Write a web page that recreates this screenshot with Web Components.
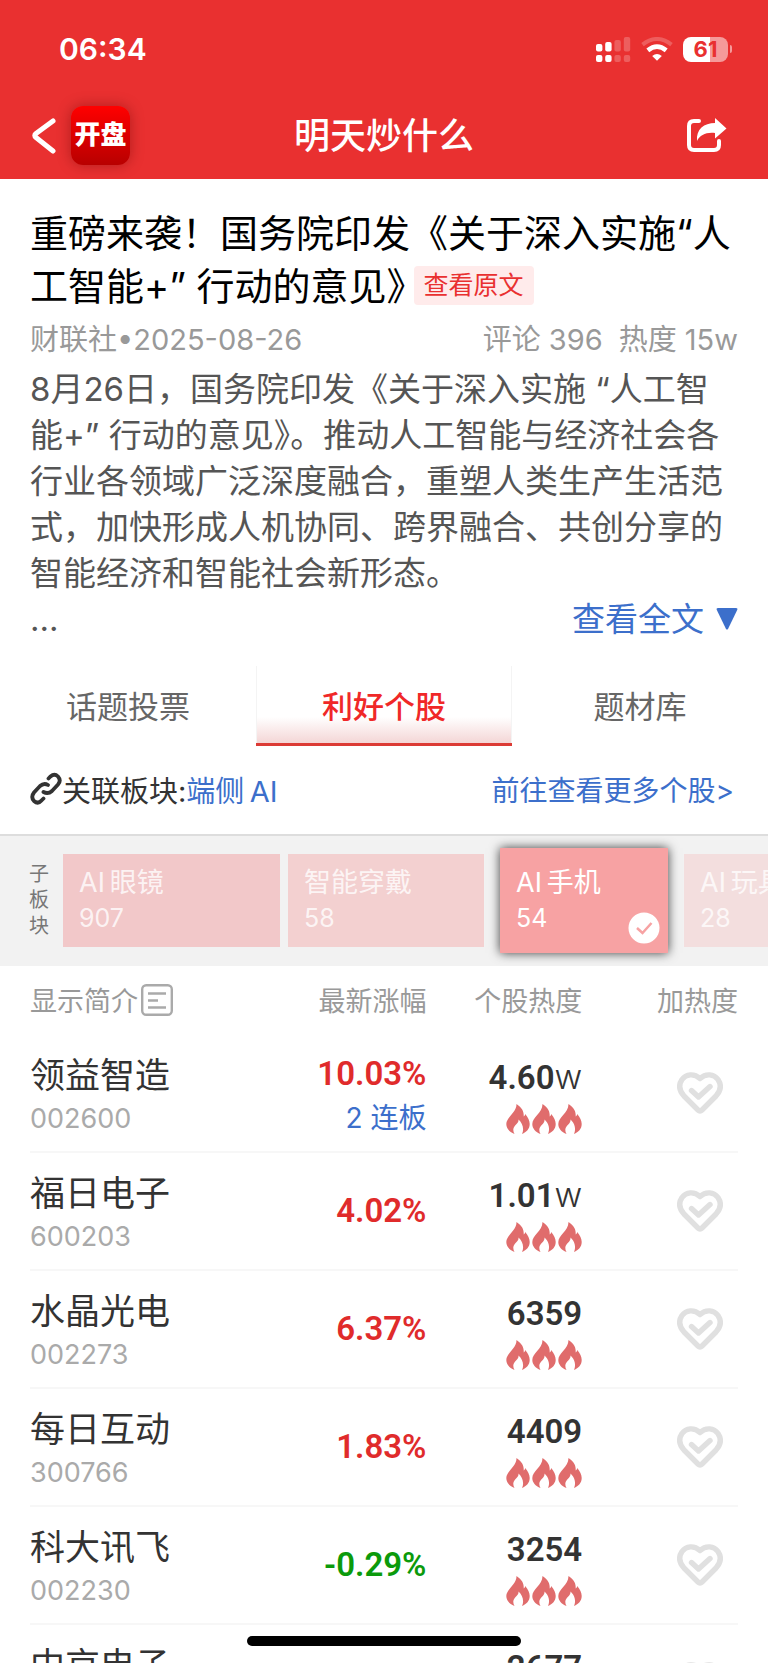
<!DOCTYPE html>
<html lang="zh-CN">
<head>
<meta charset="UTF-8">
<meta name="viewport" content="width=device-width, initial-scale=1.0">
<title>明天炒什么</title>
<style>
    body {
        margin: 0;
        height: 100vh;
        overflow: hidden;
        background: #fff;
        color: #333;
        font-family: Inter, "Noto Sans CJK SC", sans-serif;
        --red: #e93030;
        --blue: #3c6fcb;
        --grey: #999;
        --gutter: 30px;
    }
</style>
</head>
<body>
    <topic-page></topic-page>

<script>
class StatusBar extends HTMLElement {
    constructor() {
        super();
        const shadow = this.attachShadow({ mode: 'open' });
        shadow.innerHTML = `
            <style>
                :host {
                    display: flex;
                    justify-content: space-between;
                    align-items: center;
                    height: 98px;
                    padding: 0 36px 0 59px;
                }
                .time { font-size: 30px; font-weight: 600; line-height: 32px; }
                .icons { display: flex; align-items: center; gap: 10px; }
                svg { display: block; }
                .battery { display: flex; align-items: center; gap: 2px; }
                .level {
                    width: 45px;
                    height: 25px;
                    border-radius: 8px;
                    background: linear-gradient(90deg, #fff 61%, #f59a9a 61%);
                    color: var(--red);
                    font-size: 22px;
                    font-weight: 700;
                    line-height: 25px;
                    text-align: center;
                }
                .cap { width: 2px; height: 8px; border-radius: 0 4px 4px 0; background: #f59a9a; }
            </style>
            <span class="time">06:34</span>
            <div class="icons">
                <svg width="35" height="25" viewBox="0 0 35 25" fill="#fff" aria-hidden="true">
                    <rect x="0" y="7" width="6.4" height="7.5" rx="2"/>
                    <rect x="9.2" y="5" width="6.4" height="9.5" rx="2"/>
                    <rect x="0" y="18" width="6.4" height="7" rx="2"/>
                    <rect x="9.2" y="18" width="6.4" height="7" rx="2"/>
                    <g opacity=".22">
                        <rect x="18.4" y="3" width="6.4" height="11.5" rx="2"/>
                        <rect x="27.8" y="0" width="6.4" height="14.5" rx="2"/>
                        <rect x="18.4" y="18" width="6.4" height="7" rx="2"/>
                        <rect x="27.8" y="18" width="6.4" height="7" rx="2"/>
                    </g>
                </svg>
                <svg width="32" height="24" viewBox="0 0 32 24" fill="none" stroke="#fff" aria-hidden="true">
                    <path d="M1.5 7.6Q16-3.6 30.5 7.6" stroke-width="4" opacity=".22"/>
                    <path d="M6.8 13.4Q16 6 25.2 13.4" stroke-width="4.6"/>
                    <path d="M11.2 19Q16 15 20.8 19L16 23.8z" fill="#fff" stroke="none"/>
                </svg>
                <div class="battery"><span class="level">61</span><span class="cap"></span></div>
            </div>
        `;
    }
}

class NavBar extends HTMLElement {
    constructor() {
        super();
        const shadow = this.attachShadow({ mode: 'open' });
        shadow.innerHTML = `
            <style>
                :host {
                    box-sizing: border-box;
                    display: grid;
                    grid-template-columns: 1fr auto 1fr;
                    align-items: center;
                    height: 81px;
                    padding: 0 31px 6px;
                }
                .left { display: flex; align-items: center; gap: 15px; }
                button { padding: 0; border: 0; background: none; color: inherit; }
                svg { display: block; }
                .logo {
                    width: 59px;
                    height: 59px;
                    border-radius: 12px;
                    background: linear-gradient(#f00, #b80000);
                    box-shadow: 0 0 14px rgba(90, 0, 0, .4);
                    color: #fff;
                    font-size: 26px;
                    font-weight: 900;
                    line-height: 58px;
                    text-align: center;
                    text-decoration: none;
                }
                h1 { margin: 0; font-size: 36px; font-weight: 500; line-height: 48px; }
                .share { justify-self: end; margin-right: 10px; }
            </style>
            <div class="left">
                <button aria-label="返回">
                    <svg width="25" height="38" viewBox="0 0 25 38" fill="none" stroke="#fff" stroke-width="5" stroke-linecap="round" stroke-linejoin="round">
                        <path d="M22 4L5 16.500Q2.500 18.500 5 20.500L22 34"/>
                    </svg>
                </button>
                <a class="logo" href="#">开盘</a>
            </div>
            <h1><slot></slot></h1>
            <button class="share" aria-label="分享">
                <svg width="40" height="36" viewBox="0 0 40 36">
                    <path d="M12 3H7Q2 3 2 8V27Q2 32 7 32H27Q32 32 32 27V23" fill="none" stroke="#fff" stroke-width="4" stroke-linecap="round"/>
                    <path d="M10 23C9 11 17 5 28 5V0L39.5 10.5L28 20.5V15C19 14 13 17 10 23z" fill="#fff"/>
                </svg>
            </button>
        `;
    }
}

class NewsArticle extends HTMLElement {
    constructor() {
        super();
        const shadow = this.attachShadow({ mode: 'open' });
        shadow.innerHTML = `
            <style>
                :host { display: block; padding: 28px var(--gutter) 0; }
                h2 {
                    margin: 0;
                    color: #000;
                    font-size: 38px;
                    font-weight: 400;
                    line-height: 53px;
                }
                .source {
                    display: inline-block;
                    margin-left: 8px;
                    padding: 0 10px;
                    border-radius: 4px;
                    background: #ffebeb;
                    color: var(--red);
                    font-size: 25px;
                    line-height: 39px;
                    text-decoration: none;
                    vertical-align: 6px;
                }
                .meta {
                    display: flex;
                    justify-content: space-between;
                    color: var(--grey);
                    font-size: 29px;
                    line-height: 53px;
                }
                .counts { display: flex; gap: 16px; }
                .body { color: #555; font-size: 33px; line-height: 46px; }
                p { margin: 0; }
                .last { display: flex; justify-content: space-between; }
                .more {
                    display: flex;
                    align-items: center;
                    gap: 12px;
                    padding: 0;
                    border: 0;
                    background: none;
                    color: var(--blue);
                    font: inherit;
                }
            </style>
            <h2><slot name="title"></slot><a class="source" href="#">查看原文</a></h2>
            <div class="meta">
                <slot name="from"></slot>
                <span class="counts"><slot name="comments"></slot><slot name="heat"></slot></span>
            </div>
            <div class="body">
                <p><slot></slot></p>
                <div class="last">
                    <span>...</span>
                    <button class="more">查看全文
                        <svg width="22" height="22" viewBox="0 0 22 22" fill="currentColor" aria-hidden="true"><path d="M2 0H20Q22 0 21.2 2L12 21Q11 22 10 21L.8 2Q0 0 2 0z"/></svg>
                    </button>
                </div>
            </div>
        `;
    }
}

class TopicTabs extends HTMLElement {
    constructor() {
        super();
        const shadow = this.attachShadow({ mode: 'open' });
        shadow.innerHTML = `
            <style>
                :host { display: block; margin-top: 24px; }
                .tabs { display: grid; grid-template-columns: repeat(3, 1fr); }
                button {
                    height: 80px;
                    padding: 0;
                    border: 0;
                    border-bottom: 3px solid transparent;
                    background: none;
                    color: #666;
                    font: inherit;
                    font-size: 31px;
                }
                button[aria-selected="true"] {
                    border-bottom-color: #dc3b35;
                    background: linear-gradient(#fff 66%, #f4d6d6);
                    box-shadow: inset 1px 0 #f4f4f4, inset -1px 0 #f4f4f4;
                    color: #f02828;
                    font-weight: 500;
                }
            </style>
            <div class="tabs" role="tablist">
                <button role="tab" aria-selected="false">话题投票</button>
                <button role="tab" aria-selected="true">利好个股</button>
                <button role="tab" aria-selected="false">题材库</button>
            </div>
        `;
    }
}

class RelatedBoard extends HTMLElement {
    constructor() {
        super();
        const shadow = this.attachShadow({ mode: 'open' });
        shadow.innerHTML = `
            <style>
                :host {
                    display: flex;
                    justify-content: space-between;
                    align-items: center;
                    height: 86px;
                    padding: 0 34px 2px var(--gutter);
                    font-size: 29px;
                }
                .board { display: flex; align-items: center; }
                a { color: var(--blue); text-decoration: none; }
                .all { font-size: 28px; }
            </style>
            <span class="board">
                <svg width="32" height="34" viewBox="0 0 32 34" fill="none" stroke="#333" stroke-width="3.8" stroke-linecap="round" aria-hidden="true">
                    <path d="M18.500 6.500L20.500 4.500Q24.500 1 28 4.500Q31.500 8.500 28 12.500L22 19Q18 22.500 13.500 20"/>
                    <path d="M18 13Q14 10.500 10 14L4 20.500Q.5 25 4 29Q8 32.500 11.500 28.500L13.500 26.500"/>
                </svg>
                <span>关联板块:</span><a href="#"><slot></slot></a>
            </span>
            <a class="all" href="#">前往查看更多个股&gt;</a>
        `;
    }
}

class BoardChip extends HTMLElement {
    constructor() {
        super();
        const shadow = this.attachShadow({ mode: 'open' });
        shadow.innerHTML = `
            <style>
                :host { display: block; flex: none; width: 217px; }
                :host([size="m"]) { width: 196px; }
                :host([size="s"]), :host([selected]) { width: 168px; }
                button {
                    position: relative;
                    display: flex;
                    flex-direction: column;
                    justify-content: center;
                    align-items: flex-start;
                    width: 100%;
                    height: 93px;
                    padding: 0 16px;
                    border: 0;
                    background: var(--chip, #f2c8c9);
                    color: rgba(255, 255, 255, .8);
                    font: inherit;
                    font-size: 27px;
                    line-height: 36px;
                    text-align: left;
                    white-space: nowrap;
                }
                .count { font-size: 25px; line-height: 34px; }
                svg { display: none; position: absolute; right: 8px; bottom: 9px; }
                :host([selected]) { margin: 0 8px; }
                :host([selected]) button {
                    height: 105px;
                    background: #f7a2a3;
                    box-shadow: 0 0 10px rgba(0, 0, 0, .75);
                    color: #fff;
                }
                :host([selected]) svg { display: block; }
            </style>
            <button>
                <slot></slot>
                <span class="count"></span>
                <svg width="32" height="32" viewBox="0 0 32 32" aria-hidden="true">
                    <circle cx="16" cy="16" r="15.5" fill="#fff"/>
                    <path d="M9 16L14.5 21L23.5 11" fill="none" stroke="#f7a2a3" stroke-width="2.5"/>
                </svg>
            </button>
        `;
        shadow.querySelector('.count').textContent = this.getAttribute('count');
    }
}

class BoardStrip extends HTMLElement {
    constructor() {
        super();
        const shadow = this.attachShadow({ mode: 'open' });
        shadow.innerHTML = `
            <style>
                :host {
                    box-sizing: border-box;
                    display: flex;
                    align-items: center;
                    height: 132px;
                    padding: 0 0 2px 29px;
                    border-top: 2px solid #ddd;
                    background: #f2f2f2;
                    overflow: hidden;
                }
                .label {
                    flex: none;
                    width: 20px;
                    margin-right: 14px;
                    color: #777;
                    font-size: 20px;
                    line-height: 26px;
                }
                .chips { display: flex; align-items: center; gap: 8px; }
            </style>
            <span class="label">子板块</span>
            <div class="chips"><slot></slot></div>
        `;
    }
}

class StockTable extends HTMLElement {
    constructor() {
        super();
        const stocks = [
            ['领益智造', '002600', '10.03%', '4.60', 'w', '2 连板'],
            ['福日电子', '600203', '4.02%', '1.01', 'w'],
            ['水晶光电', '002273', '6.37%', '6359', ''],
            ['每日互动', '300766', '1.83%', '4409', ''],
            ['科大讯飞', '002230', '-0.29%', '3254', ''],
            ['中京电子', '002579', '', '2677', '']
        ];
        const flame = `<svg width="24" height="30" viewBox="0 0 24 30" fill="#e06c6c" aria-hidden="true"><path d="M10.5 0C16.5 4 18 8 17.7 12.5C18.7 12 19 11 19.2 10C22 13.5 23.7 16.5 23.7 20C23.7 25 20.5 28 16 30C18.5 25 16.5 19 12.5 15.5C13 20 7.8 21 7.3 25.5Q7.2 28 8.5 30C3.5 28 .3 24.5 .3 20C.3 13 10.5 9 10.5 0z"/></svg>`;
        const heart = `<svg width="46" height="42" viewBox="0 0 46 42" fill="none" stroke="#e0e0e0" stroke-width="5.4" stroke-linecap="round" stroke-linejoin="round" aria-hidden="true"><path d="M23 6.5C17 1 9 2 5 7.5C1 13.5 2.5 19 7 24L21 38Q23 40 25 38L39 24C43.5 19 45 13.5 41 7.5C37 2 29 1 23 6.5z"/><path d="M14.5 18.5L21.5 25L33 14.5"/></svg>`;
        const row = ([name, code, change, heat, unit, streak]) => `
            <tr>
                <td class="stock"><div class="name">${name}</div><div class="code">${code}</div></td>
                <td class="change ${change[0] === '-' ? 'down' : 'up'}">${change}${streak ? `<div class="streak">${streak}</div>` : ''}</td>
                <td class="stock"><div class="heat">${heat}<span>${unit}</span></div><div class="flames">${flame.repeat(3)}</div></td>
                <td><button aria-label="加热度">${heart}</button></td>
            </tr>`;

        const shadow = this.attachShadow({ mode: 'open' });
        shadow.innerHTML = `
            <style>
                :host { display: block; padding: 0 var(--gutter); }
                table { width: 100%; border-spacing: 0; table-layout: fixed; }
                th, td { box-sizing: border-box; padding: 0; text-align: right; }
                th:first-child, td:first-child { text-align: left; }
                th {
                    height: 69px;
                    padding-bottom: 2px;
                    color: var(--grey);
                    font-size: 27px;
                    font-weight: 400;
                    white-space: nowrap;
                }
                .intro {
                    display: flex;
                    align-items: center;
                    gap: 3px;
                    padding: 0;
                    border: 0;
                    background: none;
                    color: inherit;
                    font: inherit;
                }
                td { height: 118px; border-bottom: 2px solid #f7f7f7; }
                .stock { padding-top: 4px; }
                .name { font-size: 35px; line-height: 48px; }
                .code { color: #aaa; font-size: 27px; line-height: 40px; }
                .change, .heat { font-family: Roboto, Inter, sans-serif; font-size: 33px; font-weight: 600; line-height: 44px; }
                .change:has(.streak) { padding-top: 6px; }
                .up { color: #e02b2b; }
                .down { color: #0b9a0b; }
                .streak {
                    color: var(--blue);
                    font: 400 28px/44px Inter, "Noto Sans CJK SC", sans-serif;
                }
                .heat { line-height: 42px; }
                .heat span { font-family: Inter, sans-serif; font-weight: 300; font-size: 34px; line-height: 1; }
                .flames { display: flex; justify-content: flex-end; gap: 2px; padding-top: 5px; }
                svg { display: block; }
                td button { display: block; margin: 0 15px 0 auto; padding: 0; border: 0; background: none; }
            </style>
            <table>
                <colgroup><col style="width: 35%"><col style="width: 21%"><col style="width: 22%"><col style="width: 22%"></colgroup>
                <thead>
                    <tr>
                        <th><button class="intro">显示简介
                            <svg width="32" height="32" viewBox="0 0 32 32" fill="none" stroke="#aaa" stroke-width="2.4" aria-hidden="true"><rect x="1.2" y="1.2" width="29.6" height="29.6" rx="4"/><path d="M7 9.5H25M7 16.5H17M7 23.5H25"/></svg>
                        </button></th>
                        <th>最新涨幅</th>
                        <th>个股热度</th>
                        <th>加热度</th>
                    </tr>
                </thead>
                <tbody>${stocks.map(row).join('')}</tbody>
            </table>
        `;
    }
}

class TopicPage extends HTMLElement {
    constructor() {
        super();
        const shadow = this.attachShadow({ mode: 'open' });
        shadow.innerHTML = `
            <style>
                :host { display: block; }
                header { background: var(--red); color: #fff; }
                .close { font-feature-settings: "halt"; }
                .home {
                    position: fixed;
                    bottom: 17px;
                    left: 50%;
                    width: 274px;
                    height: 10px;
                    margin-left: -137px;
                    border-radius: 5px;
                    background: #000;
                }
            </style>
            <header>
                <status-bar></status-bar>
                <nav-bar>明天炒什么</nav-bar>
            </header>
            <main>
                <news-article>
                    <span slot="title">重磅来袭！国务院印发《关于深入实施“人工智能+” 行动的意见<span class="close">》</span></span>
                    <span slot="from">财联社•2025-08-26</span>
                    <span slot="comments">评论 396</span>
                    <span slot="heat">热度 15w</span>
                    8月26日，国务院印发《关于深入实施 “人工智能+” 行动的意见》。推动人工智能与经济社会各行业各领域广泛深度融合，重塑人类生产生活范式，加快形成人机协同、跨界融合、共创分享的智能经济和智能社会新形态。
                </news-article>
                <topic-tabs></topic-tabs>
                <related-board>端侧&thinsp;AI</related-board>
                <board-strip>
                    <board-chip count="907">AI&thinsp;眼镜</board-chip>
                    <board-chip count="58" size="m" style="--chip: #f3d0d0">智能穿戴</board-chip>
                    <board-chip count="54" selected>AI&thinsp;手机</board-chip>
                    <board-chip count="28" size="s" style="--chip: #f3dede">AI&thinsp;玩具</board-chip>
                </board-strip>
                <stock-table></stock-table>
            </main>
            <div class="home"></div>
        `;
    }
}

customElements.define('status-bar', StatusBar);
customElements.define('nav-bar', NavBar);
customElements.define('news-article', NewsArticle);
customElements.define('topic-tabs', TopicTabs);
customElements.define('related-board', RelatedBoard);
customElements.define('board-chip', BoardChip);
customElements.define('board-strip', BoardStrip);
customElements.define('stock-table', StockTable);
customElements.define('topic-page', TopicPage);
</script>
</body>
</html>
